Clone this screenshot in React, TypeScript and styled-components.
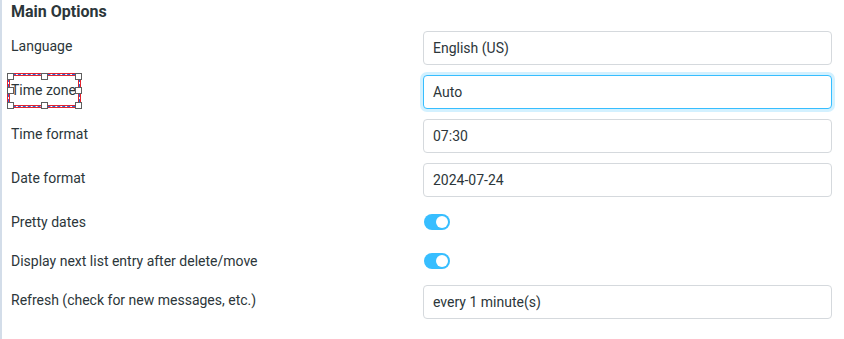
import React from "react";
import styled, { createGlobalStyle } from "styled-components";

const GlobalStyle = createGlobalStyle`
  html, body { margin: 0; padding: 0; background: #fff; }
  body { font-family: Roboto, "Liberation Sans", sans-serif; color: #2c363a; }
`;

const Panel = styled.div`
  width: 844px;
  height: 339px;
  box-sizing: border-box;
  border-left: 2px solid #d3dde9;
  padding-left: 9px;
  overflow: hidden;
`;

const Title = styled.h2`
  margin: 0;
  height: 26px;
  box-sizing: border-box;
  padding-top: 2px;
  font-size: 16px;
  line-height: 20px;
  font-weight: 700;
  color: #2c363a;
`;

const Grid = styled.div`
  display: grid;
  grid-template-columns: 412px 409px;
`;

const Label = styled.div`
  position: relative;
  padding-top: 10px;
  font-size: 14px;
  line-height: 20px;
  color: #2c363a;
`;

const Cell = styled.div`
  padding: 5px 0;
  display: flex;
  align-items: center;
`;

const Field = styled.div<{ $focused?: boolean }>`
  width: 100%;
  height: 34px;
  box-sizing: border-box;
  border: 1px solid ${(p) => (p.$focused ? "#37beff" : "#d5d9dd")};
  border-radius: 4px;
  padding: 6px 9px;
  font-size: 14px;
  line-height: 20px;
  color: #2c363a;
  background: #fff;
  box-shadow: ${(p) => (p.$focused ? "0 0 0 3px rgba(55, 190, 255, 0.22)" : "none")};
`;

const ToggleCell = styled.div`
  height: 29px;
  padding: 5px 0;
  display: flex;
  align-items: center;
`;

const Toggle = styled.span`
  position: relative;
  margin-left: 1px;
  width: 26px;
  height: 16px;
  border-radius: 8px;
  background: #37beff;
  &::after {
    content: "";
    position: absolute;
    top: 2px;
    right: 2px;
    width: 12px;
    height: 12px;
    border-radius: 50%;
    background: #fff;
  }
`;

const Selection = styled.div`
  position: absolute;
  left: -4px;
  top: 3px;
  width: 74px;
  height: 35px;
  box-sizing: border-box;
  border: 3px solid #e3232e;
  pointer-events: none;
  &::before,
  &::after {
    content: "";
    position: absolute;
    inset: -2px;
    border: 1px solid #fff;
  }
  &::after {
    border: 1px dashed #2a6bd8;
  }
`;

const Handle = styled.span<{ $x: string; $y: string }>`
  position: absolute;
  left: ${(p) => p.$x};
  top: ${(p) => p.$y};
  width: 7px;
  height: 7px;
  margin: -3.5px 0 0 -3.5px;
  box-sizing: border-box;
  background: #fff;
  border: 1px solid #5f5f5f;
  z-index: 2;
`;

const handles: [string, string][] = [
  ["0%", "0%"], ["50%", "0%"], ["100%", "0%"],
  ["0%", "50%"], ["100%", "50%"],
  ["0%", "100%"], ["50%", "100%"], ["100%", "100%"],
];

type Row = { label: string; value?: string; toggle?: boolean; focused?: boolean; selected?: boolean };

const rows: Row[] = [
  { label: "Language", value: "English (US)" },
  { label: "Time zone", value: "Auto", focused: true, selected: true },
  { label: "Time format", value: "07:30" },
  { label: "Date format", value: "2024-07-24" },
  { label: "Pretty dates", toggle: true },
  { label: "Display next list entry after delete/move", toggle: true },
  { label: "Refresh (check for new messages, etc.)", value: "every 1 minute(s)" },
];

export default function App() {
  return (
    <>
      <GlobalStyle />
      <Panel>
        <Title>Main Options</Title>
        <Grid>
          {rows.map((r) => (
            <React.Fragment key={r.label}>
              <Label>
                {r.label}
                {r.selected && (
                  <Selection>
                    {handles.map(([x, y]) => (
                      <Handle key={x + y} $x={x} $y={y} />
                    ))}
                  </Selection>
                )}
              </Label>
              {r.toggle ? (
                <ToggleCell>
                  <Toggle />
                </ToggleCell>
              ) : (
                <Cell>
                  <Field $focused={r.focused}>{r.value}</Field>
                </Cell>
              )}
            </React.Fragment>
          ))}
        </Grid>
      </Panel>
    </>
  );
}
